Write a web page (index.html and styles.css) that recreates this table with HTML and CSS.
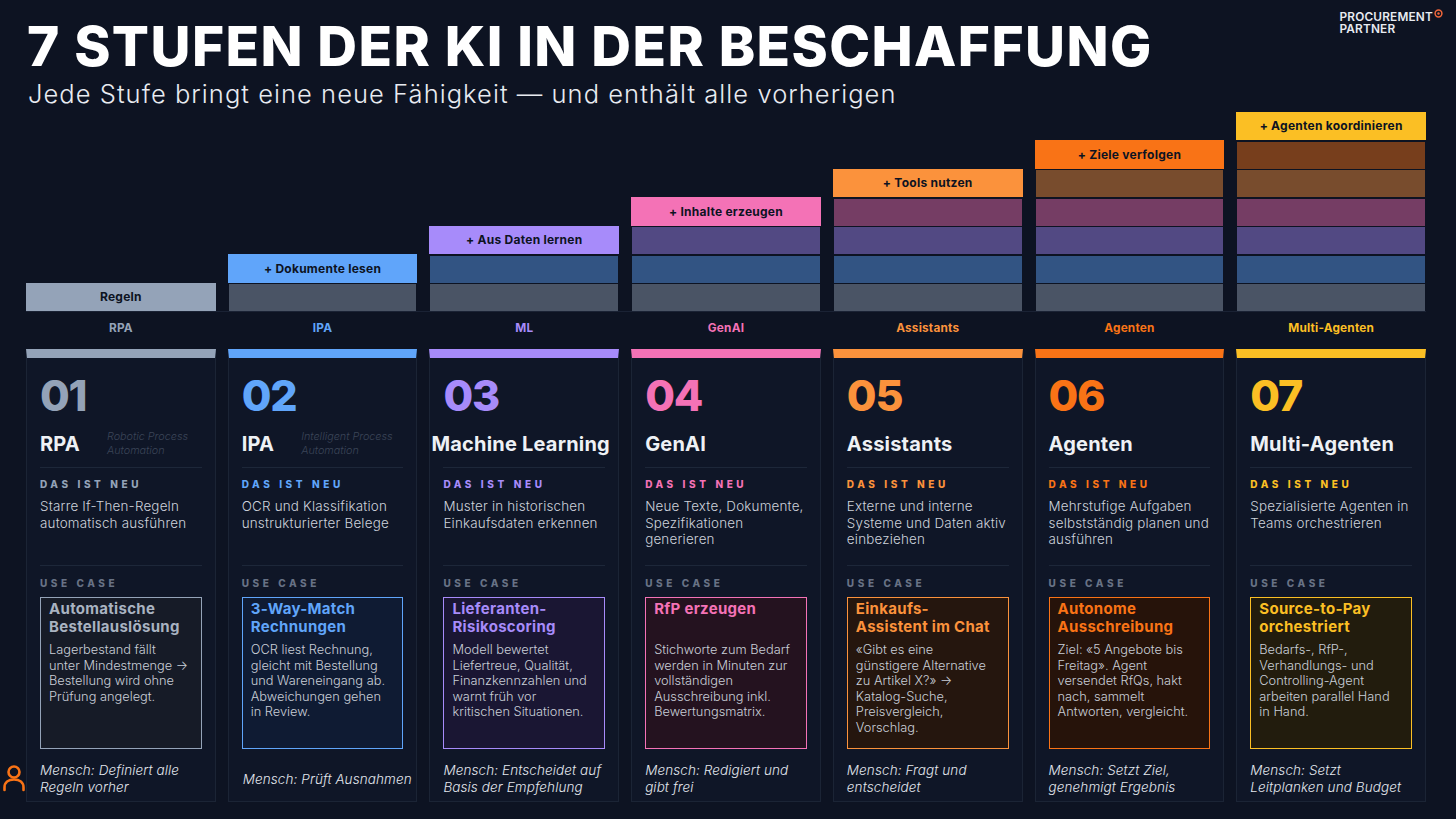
FILE: index.html
```html
<!DOCTYPE html>
<html lang="de">
<head>
<meta charset="utf-8">
<title>7 Stufen der KI in der Beschaffung</title>
<link rel="stylesheet" href="styles.css">
</head>
<body>
<div class="page">
  <header class="header">
    <div class="heading">
      <h1 class="title">7 STUFEN DER KI IN DER BESCHAFFUNG</h1>
      <p class="subtitle">Jede Stufe bringt eine neue Fähigkeit — und enthält alle vorherigen</p>
    </div>
    <div class="logo">
      <span class="logo-text">PROCUREMENT<br>PARTNER</span>
      <svg class="logo-mark" width="9" height="9" viewBox="0 0 9 9"><circle cx="4.5" cy="4.5" r="3.4" fill="none" stroke="#f0663a" stroke-width="1.5"/><circle cx="4.5" cy="4.5" r="1.2" fill="#f0663a"/></svg>
    </div>
  </header>

  <section class="chart">
    <div class="stack">
      <div class="tier t1 top">Regeln</div>
    </div>
    <div class="stack">
      <div class="tier t2 top">+ Dokumente lesen</div>
      <div class="tier t1 dim"></div>
    </div>
    <div class="stack">
      <div class="tier t3 top">+ Aus Daten lernen</div>
      <div class="tier t2 dim"></div>
      <div class="tier t1 dim"></div>
    </div>
    <div class="stack">
      <div class="tier t4 top">+ Inhalte erzeugen</div>
      <div class="tier t3 dim"></div>
      <div class="tier t2 dim"></div>
      <div class="tier t1 dim"></div>
    </div>
    <div class="stack">
      <div class="tier t5 top">+ Tools nutzen</div>
      <div class="tier t4 dim"></div>
      <div class="tier t3 dim"></div>
      <div class="tier t2 dim"></div>
      <div class="tier t1 dim"></div>
    </div>
    <div class="stack">
      <div class="tier t6 top">+ Ziele verfolgen</div>
      <div class="tier t5 dim"></div>
      <div class="tier t4 dim"></div>
      <div class="tier t3 dim"></div>
      <div class="tier t2 dim"></div>
      <div class="tier t1 dim"></div>
    </div>
    <div class="stack">
      <div class="tier t7 top">+ Agenten koordinieren</div>
      <div class="tier t6 dim"></div>
      <div class="tier t5 dim"></div>
      <div class="tier t4 dim"></div>
      <div class="tier t3 dim"></div>
      <div class="tier t2 dim"></div>
      <div class="tier t1 dim"></div>
    </div>
  </section>

  <div class="labels">
    <span class="lab s1">RPA</span>
    <span class="lab s2">IPA</span>
    <span class="lab s3">ML</span>
    <span class="lab s4">GenAI</span>
    <span class="lab s5">Assistants</span>
    <span class="lab s6">Agenten</span>
    <span class="lab s7">Multi-Agenten</span>
  </div>

  <section class="cards">
    <article class="card s1">
      <div class="num">01</div>
      <div class="name-row"><h2 class="name">RPA</h2><span class="long">Robotic Process<br>Automation</span></div>
      <div class="new"><div class="kicker">DAS IST NEU</div><p class="desc">Starre If-Then-Regeln<br>automatisch ausführen</p></div>
      <div class="use"><div class="kicker muted">USE CASE</div>
        <div class="case"><h3 class="case-title">Automatische<br>Bestellauslösung</h3><p class="case-text">Lagerbestand fällt<br>unter Mindestmenge →<br>Bestellung wird ohne<br>Prüfung angelegt.</p></div>
      </div>
      <div class="human">Mensch: Definiert alle<br>Regeln vorher</div>
    </article>

    <article class="card s2">
      <div class="num">02</div>
      <div class="name-row"><h2 class="name">IPA</h2><span class="long">Intelligent Process<br>Automation</span></div>
      <div class="new"><div class="kicker">DAS IST NEU</div><p class="desc">OCR und Klassifikation<br>unstrukturierter Belege</p></div>
      <div class="use"><div class="kicker muted">USE CASE</div>
        <div class="case"><h3 class="case-title">3-Way-Match<br>Rechnungen</h3><p class="case-text">OCR liest Rechnung,<br>gleicht mit Bestellung<br>und Wareneingang ab.<br>Abweichungen gehen<br>in Review.</p></div>
      </div>
      <div class="human">Mensch: Prüft Ausnahmen</div>
    </article>

    <article class="card s3">
      <div class="num">03</div>
      <div class="name-row"><h2 class="name wide">Machine Learning</h2></div>
      <div class="new"><div class="kicker">DAS IST NEU</div><p class="desc">Muster in historischen<br>Einkaufsdaten erkennen</p></div>
      <div class="use"><div class="kicker muted">USE CASE</div>
        <div class="case"><h3 class="case-title">Lieferanten-<br>Risikoscoring</h3><p class="case-text">Modell bewertet<br>Liefertreue, Qualität,<br>Finanzkennzahlen und<br>warnt früh vor<br>kritischen Situationen.</p></div>
      </div>
      <div class="human">Mensch: Entscheidet auf<br>Basis der Empfehlung</div>
    </article>

    <article class="card s4">
      <div class="num">04</div>
      <div class="name-row"><h2 class="name">GenAI</h2></div>
      <div class="new"><div class="kicker">DAS IST NEU</div><p class="desc">Neue Texte, Dokumente,<br>Spezifikationen<br>generieren</p></div>
      <div class="use"><div class="kicker muted">USE CASE</div>
        <div class="case"><h3 class="case-title">RfP erzeugen</h3><p class="case-text">Stichworte zum Bedarf<br>werden in Minuten zur<br>vollständigen<br>Ausschreibung inkl.<br>Bewertungsmatrix.</p></div>
      </div>
      <div class="human">Mensch: Redigiert und<br>gibt frei</div>
    </article>

    <article class="card s5">
      <div class="num">05</div>
      <div class="name-row"><h2 class="name">Assistants</h2></div>
      <div class="new"><div class="kicker">DAS IST NEU</div><p class="desc">Externe und interne<br>Systeme und Daten aktiv<br>einbeziehen</p></div>
      <div class="use"><div class="kicker muted">USE CASE</div>
        <div class="case"><h3 class="case-title">Einkaufs-<br>Assistent im Chat</h3><p class="case-text">«Gibt es eine<br>günstigere Alternative<br>zu Artikel X?» →<br>Katalog-Suche,<br>Preisvergleich,<br>Vorschlag.</p></div>
      </div>
      <div class="human">Mensch: Fragt und<br>entscheidet</div>
    </article>

    <article class="card s6">
      <div class="num">06</div>
      <div class="name-row"><h2 class="name">Agenten</h2></div>
      <div class="new"><div class="kicker">DAS IST NEU</div><p class="desc">Mehrstufige Aufgaben<br>selbstständig planen und<br>ausführen</p></div>
      <div class="use"><div class="kicker muted">USE CASE</div>
        <div class="case"><h3 class="case-title">Autonome<br>Ausschreibung</h3><p class="case-text">Ziel: «5 Angebote bis<br>Freitag». Agent<br>versendet RfQs, hakt<br>nach, sammelt<br>Antworten, vergleicht.</p></div>
      </div>
      <div class="human">Mensch: Setzt Ziel,<br>genehmigt Ergebnis</div>
    </article>

    <article class="card s7">
      <div class="num">07</div>
      <div class="name-row"><h2 class="name">Multi-Agenten</h2></div>
      <div class="new"><div class="kicker">DAS IST NEU</div><p class="desc">Spezialisierte Agenten in<br>Teams orchestrieren</p></div>
      <div class="use"><div class="kicker muted">USE CASE</div>
        <div class="case"><h3 class="case-title">Source-to-Pay<br>orchestriert</h3><p class="case-text">Bedarfs-, RfP-,<br>Verhandlungs- und<br>Controlling-Agent<br>arbeiten parallel Hand<br>in Hand.</p></div>
      </div>
      <div class="human">Mensch: Setzt<br>Leitplanken und Budget</div>
    </article>
  </section>

  <svg class="person" width="24" height="28" viewBox="0 0 24 28" aria-hidden="true">
    <circle cx="12" cy="8" r="5.5" fill="none" stroke="#f97316" stroke-width="2.6"/>
    <path d="M2.5 26 V23.5 C2.5 18.5 6.5 15.5 12 15.5 C17.5 15.5 21.5 18.5 21.5 23.5 V26" fill="none" stroke="#f97316" stroke-width="2.6" stroke-linecap="round"/>
  </svg>
</div>
</body>
</html>
```

FILE: styles.css
```css
* { box-sizing: border-box; }

html, body {
  margin: 0;
  padding: 0;
  background: #0d1322;
}

body {
  font-family: Inter, "Noto Sans", "Liberation Sans", sans-serif;
  color: #e6e9ef;
}

.page {
  position: relative;
  width: 1456px;
  height: 819px;
  padding: 0 30px 0 26px;
  overflow: hidden;
}

/* palette */
.s1, .t1 { --c: #94a3b8; --bg: #161b27; --ct: #a9b3c1; }
.s2, .t2 { --c: #60a5fa; --bg: #0f1b33; --ct: #60a5fa; }
.s3, .t3 { --c: #a78bfa; --bg: #1a1633; --ct: #a78bfa; }
.s4, .t4 { --c: #f472b6; --bg: #24121f; --ct: #f472b6; }
.s5, .t5 { --c: #fb923c; --bg: #25160e; --ct: #fb923c; }
.s6, .t6 { --c: #f97316; --bg: #26130a; --ct: #f97316; }
.s7, .t7 { --c: #fbbf24; --bg: #221c0d; --ct: #fbbf24; }

/* header */
.header {
  display: flex;
  justify-content: space-between;
  align-items: flex-start;
  height: 106px;
}

.title {
  margin: 19px 0 0 1px;
  font-size: 55px;
  line-height: 55px;
  font-weight: 800;
  letter-spacing: 1.4px;
  color: #ffffff;
  white-space: nowrap;
}

.subtitle {
  margin: 5px 0 0 2px;
  font-size: 25.5px;
  line-height: 30px;
  font-weight: 300;
  letter-spacing: 1.05px;
  color: #e8ebf1;
  white-space: nowrap;
}

.logo {
  display: flex;
  align-items: flex-start;
  margin-top: 11px;
  margin-right: -17px;
  gap: 1px;
}

.logo-text {
  font-size: 11.8px;
  line-height: 12px;
  font-weight: 600;
  color: #e8ebf1;
  letter-spacing: 0.2px;
}

.logo-mark { margin-top: -2px; }

/* chart */
.chart {
  display: grid;
  grid-template-columns: repeat(7, minmax(0, 1fr));
  column-gap: 12px;
  align-items: end;
  height: 206px;
  border-bottom: 1px solid #1a2234;
}

.stack {
  display: flex;
  flex-direction: column;
  gap: 1.5px;
}

.tier {
  height: 27px;
  background: var(--c);
}

.tier.top {
  display: flex;
  align-items: center;
  justify-content: center;
  font-size: 12px;
  font-weight: 700;
  letter-spacing: 0.25px;
  color: #0d1322;
  height: 28.5px;
}

.tier.dim {
  opacity: 0.45;
  margin: 0 1px;
}

.labels {
  display: grid;
  grid-template-columns: repeat(7, minmax(0, 1fr));
  column-gap: 12px;
  padding-top: 9px;
  height: 37px;
}

.lab {
  text-align: center;
  font-size: 11.8px;
  line-height: 14px;
  font-weight: 700;
  letter-spacing: 0.2px;
  color: var(--c);
}

/* cards */
.cards {
  display: grid;
  grid-template-columns: repeat(7, minmax(0, 1fr));
  column-gap: 12px;
}

.card {
  min-width: 0;
  height: 453px;
  background: #0f1627;
  border: 1px solid #1b2435;
  border-top: 9px solid var(--c);
  padding: 16px 13px 0 13px;
  display: flex;
  flex-direction: column;
}

.num {
  font-size: 43px;
  line-height: 42px;
  font-weight: 800;
  letter-spacing: -1.2px;
  color: var(--c);
}

.name-row {
  display: flex;
  align-items: center;
  gap: 27px;
  min-height: 38px;
  margin-top: 14px;
  padding-bottom: 9px;
  border-bottom: 1px solid #1d2739;
}

.name {
  margin: 0;
  font-size: 20px;
  line-height: 23px;
  font-weight: 700;
  letter-spacing: 0.2px;
  color: #eef1f5;
  white-space: nowrap;
}

.name.wide { margin-left: -12px; }

.long {
  font-size: 10.8px;
  line-height: 14px;
  font-style: italic;
  font-weight: 300;
  color: #3b4558;
  white-space: nowrap;
}

.new {
  padding: 10px 0 17.5px;
  border-bottom: 1px solid #1d2739;
}

.kicker {
  font-size: 10px;
  line-height: 12px;
  font-weight: 800;
  letter-spacing: 3.6px;
  color: var(--c);
}

.kicker.muted { color: #687285; }

.desc {
  margin: 8px 0 0;
  min-height: 49.5px;
  font-size: 13.4px;
  line-height: 16.5px;
  font-weight: 300;
  letter-spacing: 0.2px;
  color: #cdd2db;
  white-space: nowrap;
}

.use { padding-top: 11px; }

.case {
  margin-top: 8px;
  height: 152px;
  border: 1.5px solid var(--c);
  background: var(--bg);
  padding: 2px 8px 0 8px;
}

.case-title {
  margin: 0;
  min-height: 36px;
  font-size: 15px;
  line-height: 18px;
  font-weight: 700;
  letter-spacing: 0.3px;
  color: var(--ct);
  white-space: nowrap;
}

.case-text {
  margin: 6px 0 0;
  font-size: 12.8px;
  line-height: 15.6px;
  font-weight: 300;
  letter-spacing: 0;
  color: #c9ced7;
  white-space: nowrap;
}

.human {
  margin-top: 8px;
  height: 44px;
  display: flex;
  align-items: center;
  font-size: 13.5px;
  line-height: 17px;
  font-style: italic;
  font-weight: 300;
  letter-spacing: 0.1px;
  color: #e3e7ee;
  white-space: nowrap;
}

.s2 .human { margin-left: 1px; }

/* person icon in left margin */
.person {
  position: absolute;
  left: 2px;
  top: 764px;
}
```
